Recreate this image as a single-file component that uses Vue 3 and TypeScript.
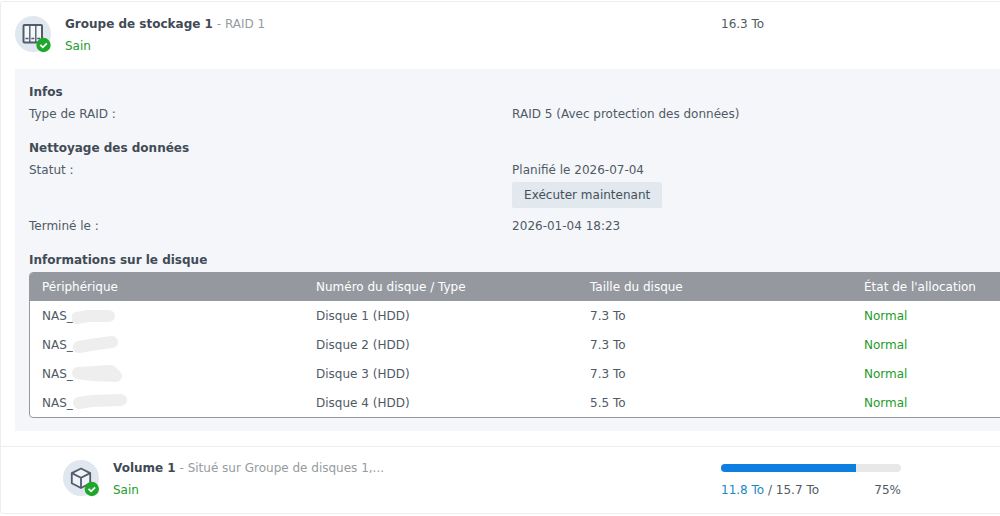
<script setup lang="ts">
interface Disk {
  device: string
  scribble: string
  name: string
  size: string
  state: string
}

const disks: Disk[] = [
  { device: 'NAS_', scribble: 'M5 12 L16 10 L37 10', name: 'Disque 1 (HDD)', size: '7.3 To', state: 'Normal' },
  { device: 'NAS_', scribble: 'M7 12 L18 10 L40 7', name: 'Disque 2 (HDD)', size: '7.3 To', state: 'Normal' },
  { device: 'NAS_', scribble: 'M6 9 L39 7 L44 12 L20 11 Z', name: 'Disque 3 (HDD)', size: '7.3 To', state: 'Normal' },
  { device: 'NAS_', scribble: 'M7 10 L20 8 L49 7', name: 'Disque 4 (HDD)', size: '5.5 To', state: 'Normal' },
]

const columns: string[] = ['Périphérique', 'Numéro du disque / Type', 'Taille du disque', "État de l'allocation"]
const usedPercent: number = 75
</script>

<template>
  <main class="page">
    <article class="pool">
      <header class="summary">
        <div class="identity">
          <svg class="icon" viewBox="0 0 36 36" aria-hidden="true">
            <circle cx="18" cy="18" r="18" fill="#e1e7ee" />
            <rect x="8.500" y="9" width="18.500" height="17.500" rx="1" fill="#f3f6fa" stroke="#505c6b" stroke-width="2" />
            <path d="M14.800 9v17M20.800 9v17" stroke="#505c6b" stroke-width="1.400" />
            <path d="M10.500 22.500h3M16.300 22.500h3M22.200 22.500h3" stroke="#505c6b" stroke-width="1.300" />
            <circle cx="28.500" cy="29" r="7.200" fill="#1ea82b" />
            <path d="M25.300 28.800l2.500 2.500 4-4" fill="none" stroke="#fff" stroke-width="1.800" />
          </svg>
          <div>
            <h1 class="title">Groupe de stockage 1<span class="muted"> - RAID 1</span></h1>
            <p class="ok">Sain</p>
          </div>
        </div>
        <p class="capacity">16.3 To</p>
      </header>

      <section class="details">
        <h2>Infos</h2>
        <dl>
          <dt>Type de RAID :</dt>
          <dd>RAID 5 (Avec protection des données)</dd>
        </dl>
        <h2>Nettoyage des données</h2>
        <dl>
          <dt>Statut :</dt>
          <dd>
            Planifié le 2026-07-04
            <button type="button" class="run">Exécuter maintenant</button>
          </dd>
          <dt>Terminé le :</dt>
          <dd>2026-01-04 18:23</dd>
        </dl>
        <h2 id="disk-heading">Informations sur le disque</h2>
        <div class="frame">
          <table aria-labelledby="disk-heading">
            <thead>
              <tr>
                <th v-for="c in columns" :key="c" scope="col">{{ c }}</th>
              </tr>
            </thead>
            <tbody>
              <tr v-for="d in disks" :key="d.name">
                <td>
                  <span class="device">{{ d.device }}<svg class="scribble" viewBox="0 0 56 20" aria-hidden="true"><path :d="d.scribble" /></svg></span>
                </td>
                <td>{{ d.name }}</td>
                <td>{{ d.size }}</td>
                <td class="ok">{{ d.state }}</td>
              </tr>
            </tbody>
          </table>
        </div>
      </section>

      <section class="summary volume">
        <div class="identity">
          <svg class="icon" viewBox="0 0 36 36" aria-hidden="true">
            <circle cx="18" cy="18" r="18" fill="#e1e7ee" />
            <path d="M18 8.500l9.200 4.600v10.200L18 28l-9.200-4.700V13.100z" fill="#f0f3f7" stroke="#505c6b" stroke-width="1.800" stroke-linejoin="round" />
            <path d="M8.800 13.100L18 17.700l9.200-4.600M18 17.700V28" fill="none" stroke="#505c6b" stroke-width="1.800" />
            <circle cx="28.800" cy="29" r="7.200" fill="#1ea82b" />
            <path d="M25.600 28.800l2.500 2.500 4-4" fill="none" stroke="#fff" stroke-width="1.800" />
          </svg>
          <div>
            <h2 class="title">Volume 1<span class="muted"> - Situé sur Groupe de disques 1,...</span></h2>
            <p class="ok">Sain</p>
          </div>
        </div>
        <div class="usage">
          <div class="bar" role="progressbar" aria-label="Volume 1" :aria-valuenow="usedPercent" aria-valuemin="0" aria-valuemax="100">
            <div class="fill" :style="{ width: usedPercent + '%' }"></div>
          </div>
          <p class="figures">
            <span><span class="used">11.8 To</span> / 15.7 To</span>
            <span>{{ usedPercent }}%</span>
          </p>
        </div>
      </section>
    </article>
  </main>
</template>

<style>
body {
  margin: 0;
  background: #fff;
}
</style>

<style scoped>
.page {
  overflow: hidden;
  padding-top: 1px;
  color: #505a64;
  font: 12px/22px Verdana, "DejaVu Sans", sans-serif;
}
.pool {
  box-sizing: border-box;
  width: calc(100% + 156px);
  border: 1px solid #ededee;
  border-radius: 3px;
}
h1, h2, p, dl, dd {
  margin: 0;
}
h1, h2 {
  font-size: 12px;
  line-height: 22px;
  color: #414b55;
}
.summary {
  display: grid;
  grid-template-columns: 706px 180px;
  padding: 11px 14px;
}
.volume {
  margin-top: 15px;
  padding: 10px 14px 12px 62px;
  grid-template-columns: 658px 180px;
  border-top: 1px solid #ededee;
}
.identity {
  display: flex;
  gap: 14px;
}
.icon {
  width: 36px;
  height: 36px;
  margin-top: 3px;
  overflow: visible;
}
.muted {
  font-weight: 400;
  color: #969ba0;
}
.ok {
  color: #1e9b28;
}
.details {
  margin: 1px 14px 0;
  padding: 12px 14px 14px;
  background: #f4f6fa;
}
dl {
  display: grid;
  grid-template-columns: 44% 1fr;
  margin-bottom: 12px;
}
dd + dt, dt + dd + dt + dd {
  margin-top: 7px;
}
.run {
  display: block;
  height: 26px;
  margin-top: 1px;
  padding: 0 12px;
  border: 0;
  border-radius: 2px;
  background: #e1e8ee;
  color: #46505c;
  font: inherit;
}
.frame {
  margin-top: 1px;
  border: 1px solid #95999f;
  border-radius: 4px;
  overflow: hidden;
  background: #fff;
}
.details {
  padding-bottom: 13px;
}
table {
  width: 100%;
  table-layout: fixed;
  border-collapse: collapse;
}
th, td {
  height: 29px;
  padding: 0 12px;
  text-align: left;
  font-weight: 400;
}
th {
  height: 28px;
  background: #95999f;
  color: #fff;
}
.device {
  display: flex;
  align-items: center;
}
.scribble {
  width: 56px;
  height: 20px;
  margin-left: -1px;
}
.scribble path {
  fill: #eee;
  stroke: #eee;
  stroke-width: 12px;
  stroke-linecap: round;
  stroke-linejoin: round;
}
.bar {
  height: 8px;
  margin-top: 7px;
  border-radius: 4px;
  overflow: hidden;
  background: #e8e8e9;
}
.fill {
  height: 100%;
  background: #0d7fe0;
}
.figures {
  display: flex;
  justify-content: space-between;
  margin-top: 7px;
}
.used {
  color: #1988c4;
}
</style>
